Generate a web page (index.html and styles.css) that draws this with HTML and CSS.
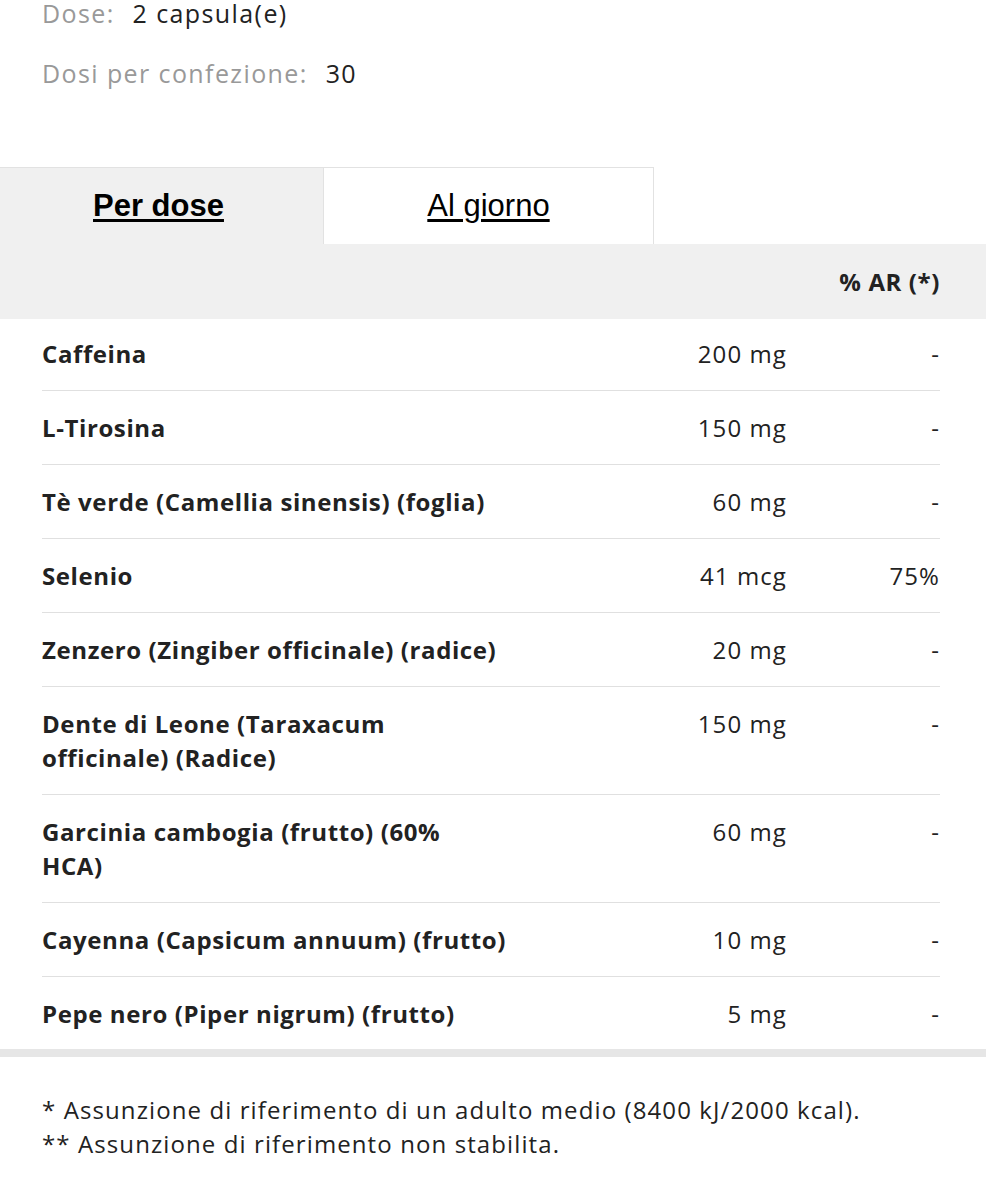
FILE: index.html
```html
<!DOCTYPE html>
<html lang="it">
<head>
<meta charset="utf-8">
<title>Valori nutrizionali</title>
<link rel="stylesheet" href="styles.css">
</head>
<body>
<div class="info">
  <p class="info-line"><span class="label">Dose:</span> <span class="value">2 capsula(e)</span></p>
  <p class="info-line"><span class="label">Dosi per confezione:</span> <span class="value">30</span></p>
</div>

<div class="tabs">
  <a class="tab tab-active" href="#">Per dose</a>
  <a class="tab" href="#">Al giorno</a>
</div>

<div class="table">
  <div class="thead">
    <span></span><span></span><span class="pct">% AR (*)</span>
  </div>
  <div class="tbody">
    <div class="row"><span class="name">Caffeina</span><span class="amt">200 mg</span><span class="pct">-</span></div>
    <div class="row"><span class="name">L-Tirosina</span><span class="amt">150 mg</span><span class="pct">-</span></div>
    <div class="row"><span class="name">Tè verde (Camellia sinensis) (foglia)</span><span class="amt">60 mg</span><span class="pct">-</span></div>
    <div class="row"><span class="name">Selenio</span><span class="amt">41 mcg</span><span class="pct">75%</span></div>
    <div class="row"><span class="name">Zenzero (Zingiber officinale) (radice)</span><span class="amt">20 mg</span><span class="pct">-</span></div>
    <div class="row"><span class="name">Dente di Leone (Taraxacum officinale) (Radice)</span><span class="amt">150 mg</span><span class="pct">-</span></div>
    <div class="row"><span class="name">Garcinia cambogia (frutto) (60%<br>HCA)</span><span class="amt">60 mg</span><span class="pct">-</span></div>
    <div class="row"><span class="name">Cayenna (Capsicum annuum) (frutto)</span><span class="amt">10 mg</span><span class="pct">-</span></div>
    <div class="row"><span class="name">Pepe nero (Piper nigrum) (frutto)</span><span class="amt">5 mg</span><span class="pct">-</span></div>
  </div>
</div>

<div class="notes">
  <p>* Assunzione di riferimento di un adulto medio (8400 kJ/2000 kcal).</p>
  <p>** Assunzione di riferimento non stabilita.</p>
</div>
</body>
</html>
```

FILE: styles.css
```css
* { box-sizing: border-box; }
body {
  margin: 0;
  font-family: "Open Sans", "Noto Sans", sans-serif;
  font-size: 24px;
  line-height: 34px;
  letter-spacing: 1.1px;
  color: #222;
  background: #fff;
}
p { margin: 0; }

.info {
  padding: 0 42px;
  display: flex;
  flex-direction: column;
  gap: 34px;
}
.info-line { line-height: 26px; font-size: 25px; letter-spacing: 1.4px; }
.label { color: #999; }
.value { color: #222; margin-left: 10px; }

.tabs {
  margin-top: 81px;
  display: flex;
  width: 654px;
  border-top: 1px solid #e2e2e2;
}
.tab {
  flex: 0 0 auto;
  height: 76px;
  display: flex;
  align-items: center;
  justify-content: center;
  font-family: "Liberation Sans", Arial, sans-serif;
  font-size: 31px;
  letter-spacing: 0;
  color: #000;
  text-decoration: underline;
  text-underline-offset: 3px;
}
.tab-active {
  width: 323px;
  background: #f0f0f0;
  font-weight: bold;
  padding-right: 6px;
}
.tab:not(.tab-active) {
  width: 331px;
  background: #fff;
  border-left: 1px solid #e2e2e2;
  border-right: 1px solid #e2e2e2;
}

.thead {
  background: #f0f0f0;
  height: 75px;
  padding: 0 46px 0 42px;
  display: grid;
  grid-template-columns: 492px 1fr 153px;
  align-items: center;
  font-weight: bold;
  letter-spacing: 0.6px;
}
.thead .pct { text-align: right; }

.tbody {
  padding: 0 46px 0 42px;
  border-bottom: 8px solid #e6e6e6;
}
.row {
  display: grid;
  grid-template-columns: 492px 1fr 153px;
  padding: 20px 0 19px;
  border-bottom: 1px solid #e0e0e0;
  align-items: start;
}
.row:first-child { padding-top: 18px; }
.row:last-child { border-bottom: none; padding-bottom: 18px; }
.name { font-weight: bold; padding-right: 20px; letter-spacing: 0.6px; }
.amt, .pct { text-align: right; }

.notes {
  padding: 36px 42px;
}
```
